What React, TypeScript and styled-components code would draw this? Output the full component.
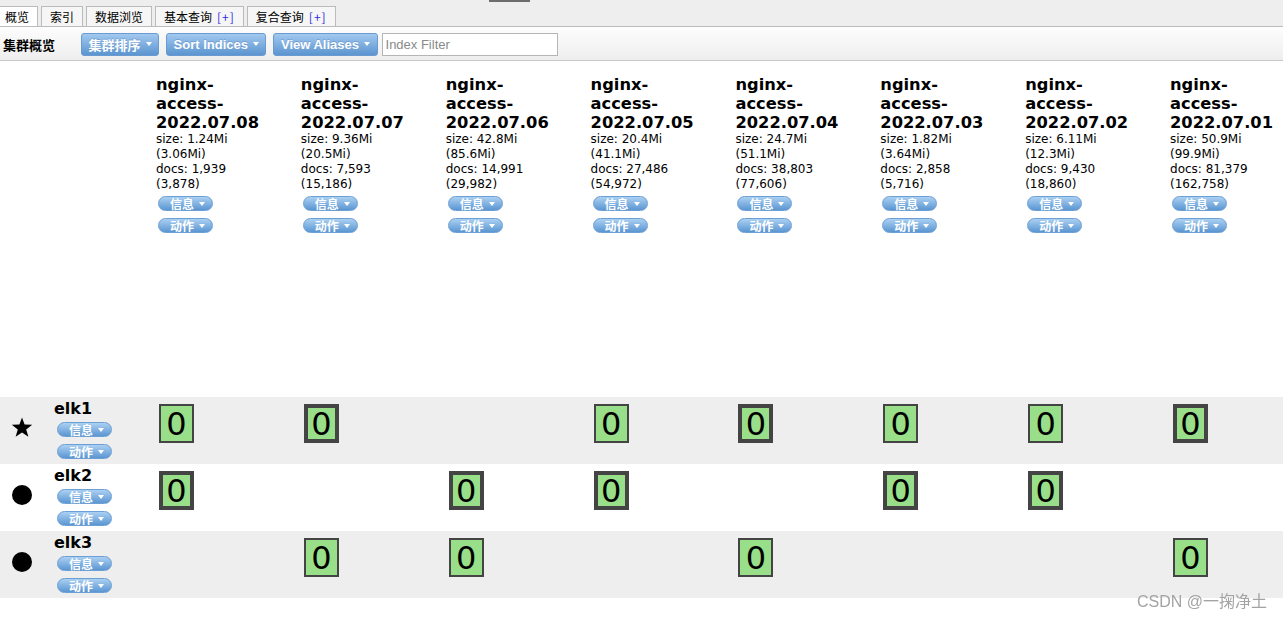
import React from "react";
import styled, { createGlobalStyle, css } from "styled-components";

type Shard = "primary" | "replica" | null;

type IndexInfo = {
  name: string;
  size: string;
  totalSize: string;
  docs: string;
  totalDocs: string;
};

type NodeInfo = {
  name: string;
  master: boolean;
  shards: Shard[];
};

const INDICES: IndexInfo[] = [
  { name: "nginx-access-2022.07.08", size: "1.24Mi", totalSize: "3.06Mi", docs: "1,939", totalDocs: "3,878" },
  { name: "nginx-access-2022.07.07", size: "9.36Mi", totalSize: "20.5Mi", docs: "7,593", totalDocs: "15,186" },
  { name: "nginx-access-2022.07.06", size: "42.8Mi", totalSize: "85.6Mi", docs: "14,991", totalDocs: "29,982" },
  { name: "nginx-access-2022.07.05", size: "20.4Mi", totalSize: "41.1Mi", docs: "27,486", totalDocs: "54,972" },
  { name: "nginx-access-2022.07.04", size: "24.7Mi", totalSize: "51.1Mi", docs: "38,803", totalDocs: "77,606" },
  { name: "nginx-access-2022.07.03", size: "1.82Mi", totalSize: "3.64Mi", docs: "2,858", totalDocs: "5,716" },
  { name: "nginx-access-2022.07.02", size: "6.11Mi", totalSize: "12.3Mi", docs: "9,430", totalDocs: "18,860" },
  { name: "nginx-access-2022.07.01", size: "50.9Mi", totalSize: "99.9Mi", docs: "81,379", totalDocs: "162,758" },
];

const P: Shard = "primary";
const R: Shard = "replica";

const NODES: NodeInfo[] = [
  { name: "elk1", master: true, shards: [R, P, null, R, P, R, R, P] },
  { name: "elk2", master: false, shards: [P, null, P, P, null, P, P, null] },
  { name: "elk3", master: false, shards: [null, R, R, null, R, null, null, R] },
];

const TABS = [
  { label: "概览", plus: false },
  { label: "索引", plus: false },
  { label: "数据浏览", plus: false },
  { label: "基本查询", plus: true },
  { label: "复合查询", plus: true },
];

const GlobalStyle = createGlobalStyle`
  html, body {
    margin: 0;
    padding: 0;
    background: #fff;
  }
  body {
    font-family: "DejaVu Sans", Verdana, "Noto Sans CJK SC", sans-serif;
    font-size: 12px;
    color: #000;
    overflow: hidden;
  }
`;

const TabStrip = styled.div`
  position: relative;
  height: 26px;
  display: flex;
  align-items: flex-end;
  background: #eee;
  border-bottom: 1px solid #bbb;
`;

const TopMarker = styled.div`
  position: absolute;
  top: 0;
  left: 489px;
  width: 41px;
  height: 2px;
  background: #6d6d6d;
`;

const TabList = styled.div`
  display: flex;
  gap: 3px;
  margin-left: -4px;
`;

const Tab = styled.div<{ $active?: boolean }>`
  box-sizing: border-box;
  height: 20px;
  padding: 0 8px;
  border: 1px solid #bbb;
  border-bottom: none;
  background: ${(p) => (p.$active ? "#fff" : "#f6f6f6")};
  font: 12px/19px "Noto Sans CJK SC", sans-serif;
  white-space: nowrap;
`;

const TabPlus = styled.span`
  margin-left: 5px;
  letter-spacing: 1px;
  color: #2b2be0;
`;

const Toolbar = styled.div`
  box-sizing: border-box;
  height: 34px;
  display: flex;
  align-items: center;
  padding: 1px 0 0 3px;
  background: linear-gradient(#fdfdfd, #eeeeee);
  border-bottom: 1px solid #c8c8c8;
`;

const ToolbarTitle = styled.div`
  font: bold 13px "Noto Sans CJK SC", sans-serif;
  margin-right: 26px;
`;

const ToolButton = styled.button`
  box-sizing: border-box;
  height: 23px;
  display: inline-flex;
  align-items: center;
  gap: 5px;
  padding: 0 6.5px;
  margin-right: 7px;
  border: 1px solid #6a9bd0;
  border-radius: 3px;
  background: linear-gradient(#a2c9ef, #5b94d0);
  color: #fff;
  font: bold 13px "Liberation Sans", "Noto Sans CJK SC", sans-serif;
  text-shadow: 0 -1px 0 rgba(40, 80, 140, 0.25);
  cursor: pointer;
`;

const Caret = styled.span`
  display: inline-block;
  width: 0;
  height: 0;
  border-style: solid;
  border-width: 4px 3.5px 0 3.5px;
  border-color: #fff transparent transparent transparent;
`;

const FilterInput = styled.input`
  box-sizing: border-box;
  width: 176px;
  height: 23px;
  margin-left: -3px;
  padding: 0 3px;
  border: 1px solid #b5b5b5;
  background: #fff;
  font: 13px "Liberation Sans", sans-serif;
  outline: none;
  &::placeholder {
    color: #8a8a8a;
  }
`;

const columns = css`
  display: grid;
  grid-template-columns: 156px repeat(7, 144.86px) 1fr;
`;

const HeaderRow = styled.div`
  ${columns};
  height: 336px;
`;

const NodeRow = styled.div<{ $shaded: boolean }>`
  ${columns};
  height: 67px;
  background: ${(p) => (p.$shaded ? "#eee" : "#fff")};
`;

const IndexHeader = styled.div`
  padding-top: 14px;
  min-width: 0;
`;

const IndexName = styled.h3`
  margin: 0;
  width: 112px;
  font: bold 16.3px/19px "DejaVu Sans", Verdana, sans-serif;
`;

const IndexStats = styled.div`
  width: 106px;
  line-height: 15px;
`;

const PillStack = styled.div<{ $indent: number }>`
  display: flex;
  flex-direction: column;
  align-items: flex-start;
  gap: 7px;
  margin: 4px 0 0 ${(p) => p.$indent}px;
`;

const Pill = styled.button`
  box-sizing: border-box;
  width: 55px;
  height: 15px;
  display: flex;
  align-items: center;
  gap: 5px;
  padding: 0 0 0 11px;
  border: 1px solid #6c9fd4;
  border-radius: 8px;
  background: linear-gradient(#abd0f2, #5b96d2);
  color: #fff;
  font: bold 12px/13px "Noto Sans CJK SC", sans-serif;
  cursor: pointer;
`;

const NodeCell = styled.div`
  display: flex;
`;

const NodeIcon = styled.div`
  width: 44px;
  display: flex;
  align-items: center;
  justify-content: center;
  padding-bottom: 6px;
`;

const NodeDetails = styled.div`
  padding: 2px 0 0 10px;
`;

const NodeName = styled.div`
  font: bold 16px/19px "DejaVu Sans", Verdana, sans-serif;
`;

const ShardCell = styled.div`
  padding: 7px 0 0 3px;
`;

const ShardBox = styled.div<{ $primary: boolean }>`
  box-sizing: border-box;
  width: 35px;
  height: 39px;
  display: flex;
  align-items: center;
  justify-content: center;
  border: ${(p) => (p.$primary ? 4 : 2)}px solid #444;
  background: #99de88;
  font: 32px/1 "DejaVu Sans", Verdana, sans-serif;
  color: #000;
`;

const Watermark = styled.div`
  position: fixed;
  right: 16px;
  bottom: 7px;
  font: 16px "Liberation Sans", "Noto Sans CJK SC", sans-serif;
  color: #a3a3a3;
`;

const ActionPills: React.FC<{ indent: number }> = ({ indent }) => (
  <PillStack $indent={indent}>
    <Pill>
      信息 <Caret />
    </Pill>
    <Pill>
      动作 <Caret />
    </Pill>
  </PillStack>
);

const StarIcon = () => (
  <svg width="22" height="21" viewBox="0 0 22 21">
    <polygon
      fill="#000"
      points="11,0.5 13.6,7.6 21.2,7.8 15.2,12.5 17.4,19.8 11,15.5 4.6,19.8 6.8,12.5 0.8,7.8 8.4,7.6"
    />
  </svg>
);

const DotIcon = () => (
  <svg width="22" height="22" viewBox="0 0 22 22">
    <circle cx="11" cy="11" r="10" fill="#000" />
  </svg>
);

// put a break chance after each hyphen, so "access-2022" can wrap too
const breakable = (name: string) =>
  name.split("-").map((part, i, all) => (
    <React.Fragment key={i}>
      {part}
      {i < all.length - 1 && (
        <>
          -<wbr />
        </>
      )}
    </React.Fragment>
  ));

const App: React.FC = () => (
  <>
    <GlobalStyle />
    <TabStrip>
      <TopMarker />
      <TabList>
        {TABS.map((tab, i) => (
          <Tab key={tab.label} $active={i === 0}>
            {tab.label}
            {tab.plus && <TabPlus>[+]</TabPlus>}
          </Tab>
        ))}
      </TabList>
    </TabStrip>

    <Toolbar>
      <ToolbarTitle>集群概览</ToolbarTitle>
      <ToolButton>
        集群排序 <Caret />
      </ToolButton>
      <ToolButton>
        Sort Indices <Caret />
      </ToolButton>
      <ToolButton>
        View Aliases <Caret />
      </ToolButton>
      <FilterInput placeholder="Index Filter" />
    </Toolbar>

    <HeaderRow>
      <div />
      {INDICES.map((index) => (
        <IndexHeader key={index.name}>
          <IndexName>{breakable(index.name)}</IndexName>
          <IndexStats>
            size: {index.size} ({index.totalSize})
            <br />
            docs: {index.docs} ({index.totalDocs})
          </IndexStats>
          <ActionPills indent={2} />
        </IndexHeader>
      ))}
    </HeaderRow>

    {NODES.map((node, row) => (
      <NodeRow key={node.name} $shaded={row % 2 === 0}>
        <NodeCell>
          <NodeIcon>{node.master ? <StarIcon /> : <DotIcon />}</NodeIcon>
          <NodeDetails>
            <NodeName>{node.name}</NodeName>
            <ActionPills indent={3} />
          </NodeDetails>
        </NodeCell>
        {node.shards.map((shard, col) => (
          <ShardCell key={col}>
            {shard && <ShardBox $primary={shard === "primary"}>0</ShardBox>}
          </ShardCell>
        ))}
      </NodeRow>
    ))}

    <Watermark>CSDN @一掬净土</Watermark>
  </>
);

export default App;
